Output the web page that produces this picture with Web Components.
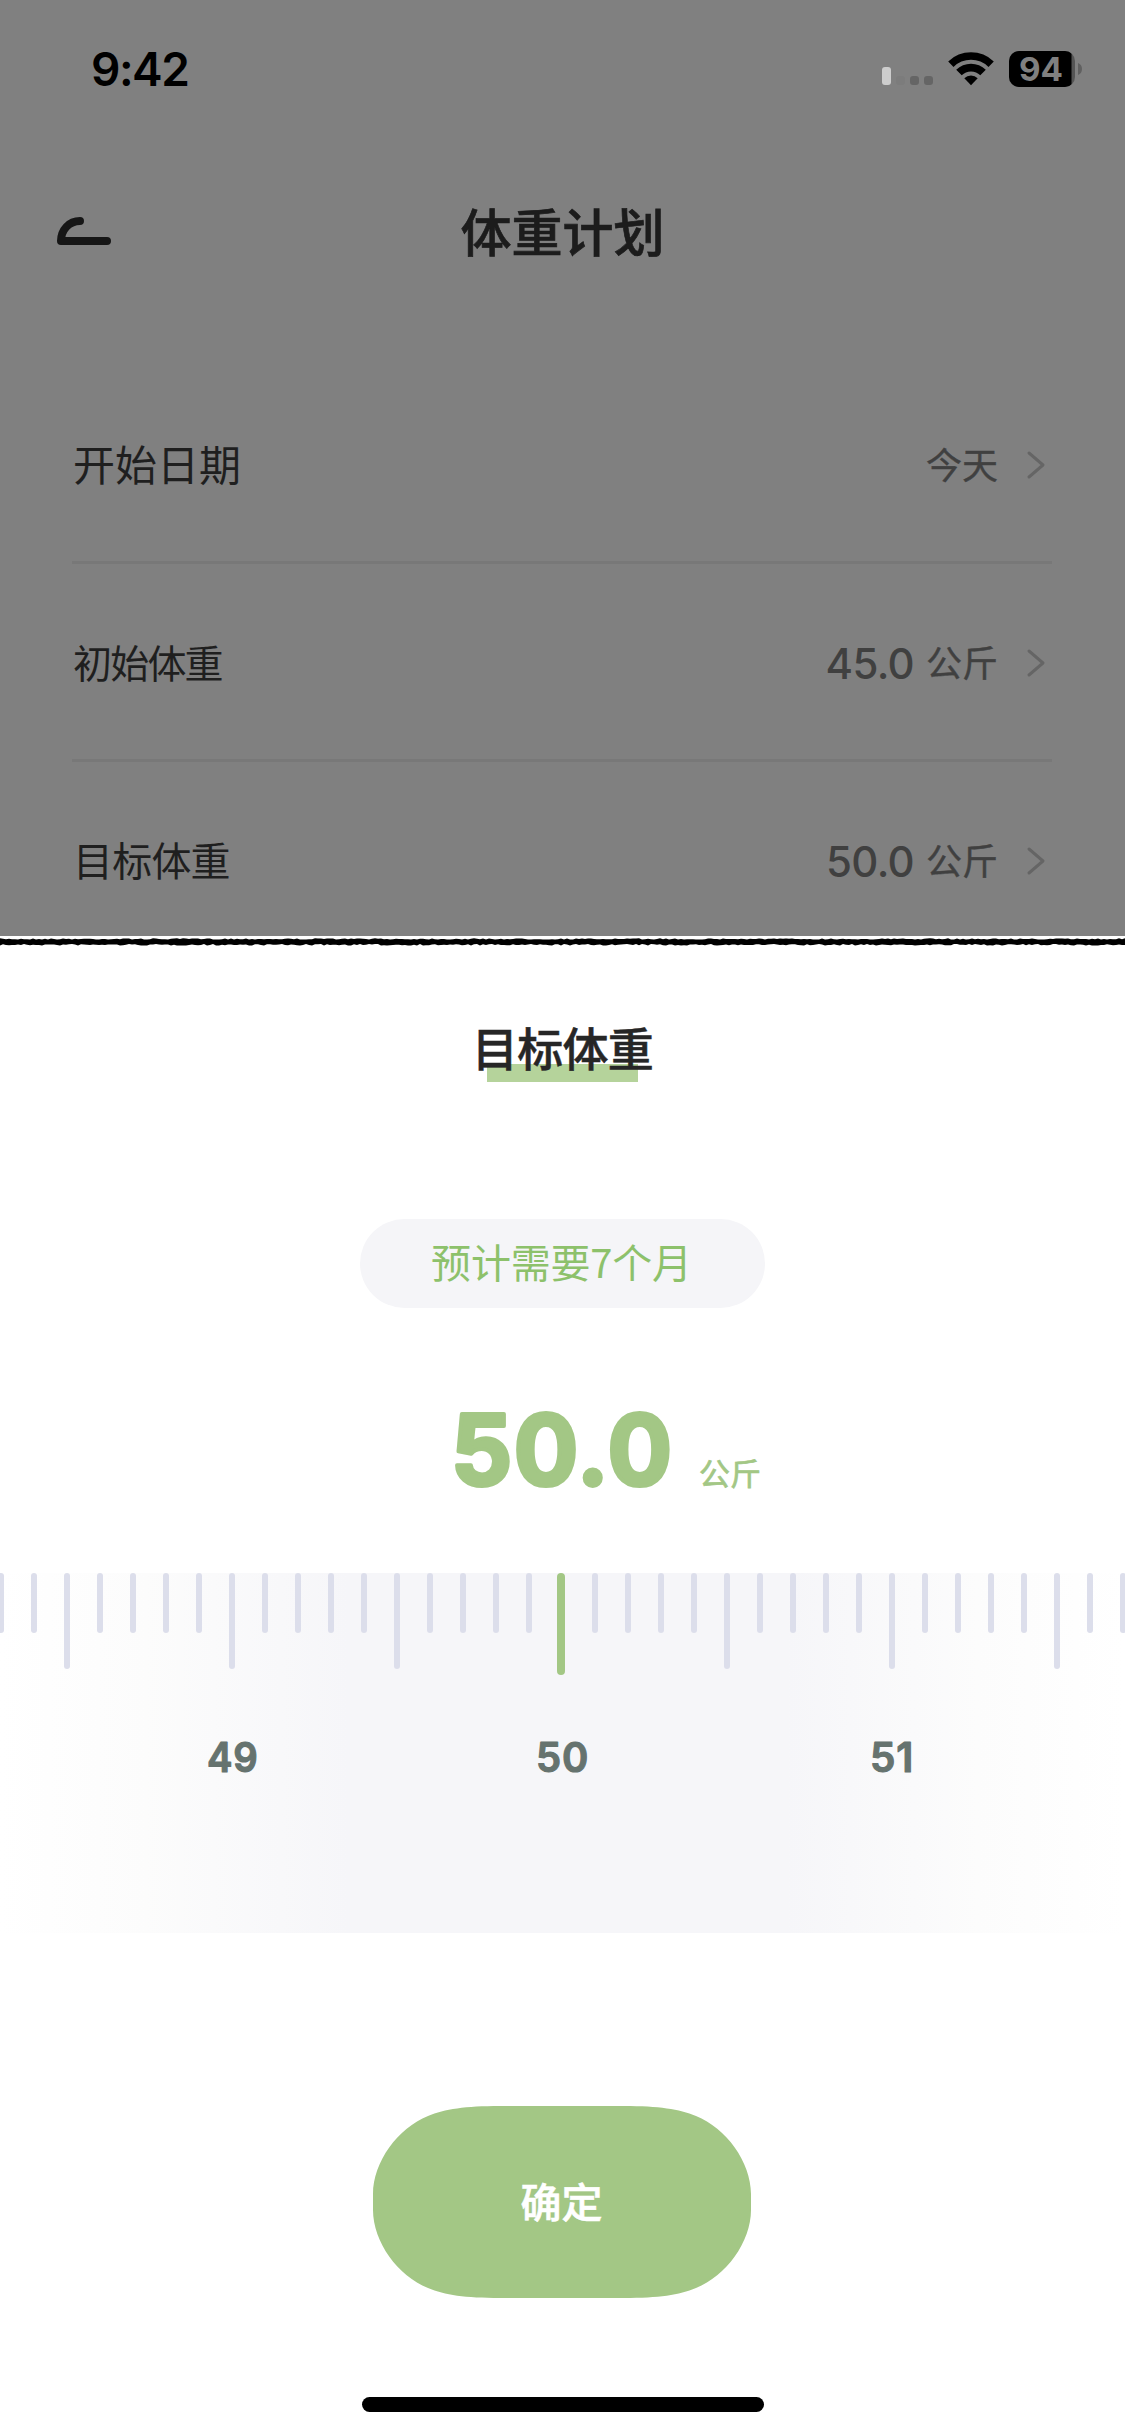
<!DOCTYPE html>
<html lang="zh-CN">
<head>
<meta charset="utf-8">
<title>体重计划</title>
<style>
html,body{margin:0;padding:0;background:#fff}
body{width:1125px;height:2436px;overflow:hidden;font-family:Inter,"Noto Sans CJK SC",sans-serif}
</style>
</head>
<body>
<weight-app></weight-app>
<script>
const define = (name, html, setup) => {
  const tpl = document.createElement('template');
  tpl.innerHTML = html;
  customElements.define(name, class extends HTMLElement {
    connectedCallback() {
      if (this.shadowRoot) return;
      const root = this.attachShadow({ mode: 'open' });
      root.append(tpl.content.cloneNode(true));
      if (setup) setup(this, root);
    }
  });
};

define('status-bar', `
<style>
:host{display:flex;height:138px;box-sizing:border-box;padding:0 43px 0 91px;justify-content:space-between;color:#000}
time{font-size:46px;font-weight:600;line-height:138px;letter-spacing:-1.5px}
svg{display:block;width:204px;height:138px}
.pct{font:700 33px Inter,sans-serif}
</style>
<time>9:42</time>
<svg viewBox="878 0 204 138">
  <rect x="882" y="67" width="9" height="18" rx="3" fill="#cdcdcd"/>
  <rect x="896" y="76" width="9" height="9" rx="3" fill="#7c7c7c"/>
  <rect x="910" y="76" width="9" height="9" rx="3" fill="#656565"/>
  <rect x="924" y="76" width="9" height="9" rx="3" fill="#656565"/>
  <path d="M948.200 61.500 A32.500 32.500 0 0 1 993.800 61.500 L988.500 67 A24.700 24.700 0 0 0 953.500 67 Z"/>
  <path d="M956.200 69.800 A21 21 0 0 1 985.800 69.800 L980.300 75.300 A13.200 13.200 0 0 0 961.700 75.300 Z"/>
  <path d="M964.300 78.300 A9.700 9.700 0 0 1 977.700 78.300 L971 85.300 Z"/>
  <clipPath id="b"><rect x="1009" y="51" width="66" height="36" rx="10"/></clipPath>
  <g clip-path="url(#b)"><rect x="1009" y="51" width="66" height="36" fill="#555"/><rect x="1009" y="51" width="62.500" height="36" rx="3"/></g>
  <path d="M1078 63 Q1082 64.500 1082 69 Q1082 73.500 1078 75 Z" fill="#606060"/>
  <text class="pct" x="1019" y="81" textLength="44" lengthAdjust="spacingAndGlyphs" fill="#808080">94</text>
</svg>`);

define('nav-bar', `
<style>
:host{display:grid;grid-template-columns:1fr auto 1fr;height:186px;padding:0 56px;align-items:center;color:#1c1c1c}
svg{display:block;width:56px;height:30px;margin-bottom:3px}
h1{margin:0;padding-top:3px;font-size:51px;font-weight:500;line-height:186px;-webkit-text-stroke:.7px #1c1c1c}
</style>
<svg viewBox="56 216 56 30" fill="none" stroke="#161616" stroke-width="8" stroke-linecap="round" stroke-linejoin="round"><path d="M80 221 C69 221 61 230 61 241 H107"/></svg>
<h1><slot></slot></h1>`);

define('setting-row', `
<style>
:host{display:flex;height:195px;border-bottom:3px solid #787878;align-items:center;justify-content:space-between;color:#1f1f1f}
:host([last]){border-color:transparent}
.label{font-size:var(--size,42px);letter-spacing:var(--track,0);padding-left:1px;margin-top:-2px}
.end{display:flex;align-items:center;color:#404040}
.num{font-size:42px;font-weight:500;letter-spacing:-.7px;margin:3px 12px 0 0}
.unit{font-size:36px;font-weight:400;margin-top:-1px;-webkit-text-stroke:.4px #404040}
svg{display:block;width:20px;height:30px;margin:2px 6px 0 28px}
</style>
<span class="label"><slot></slot></span>
<span class="end"><span class="num"></span><span class="unit"></span>
<svg viewBox="0 0 20 30" fill="none" stroke="#656565" stroke-width="3" stroke-linecap="round" stroke-linejoin="round"><path d="M3 3 L17 15 L3 27"/></svg></span>`,
(el, root) => {
  const num = root.querySelector('.num');
  if (el.getAttribute('num')) num.textContent = el.getAttribute('num'); else num.remove();
  root.querySelector('.unit').textContent = el.getAttribute('unit');
});

define('ink-edge', `
<style>:host{display:block;height:12px}svg{display:block;width:1125px;height:12px}</style>
<svg viewBox="0 0 1125 12"><path/></svg>`,
(el, root) => {
  let seed = 7;
  const rnd = () => (seed = (seed * 16807) % 2147483647) / 2147483647;
  const top = [], bottom = [];
  for (let x = 0; x <= 1128; x += 3) {
    top.push(x + ' ' + (2.3 + rnd() * 1.3).toFixed(1));
    bottom.unshift(x + ' ' + (8 + rnd() * 1.6).toFixed(1));
  }
  root.querySelector('path').setAttribute('d', 'M' + top.concat(bottom).join('L') + 'Z');
});

define('round-number', `
<style>
:host{display:block}
svg{display:block;overflow:visible;width:100%;height:100%}
text{font-family:Inter,sans-serif;fill:currentColor;stroke:currentColor;stroke-linejoin:round;stroke-linecap:round}
</style>
<svg><text></text></svg>`,
(el, root) => {
  const t = root.querySelector('text'), a = n => el.getAttribute(n);
  t.textContent = a('value');
  t.setAttribute('x', a('x')); t.setAttribute('y', a('y'));
  t.setAttribute('textLength', a('length'));
  t.setAttribute('lengthAdjust', 'spacingAndGlyphs');
  t.style.cssText = 'font-size:' + a('size') + 'px;font-weight:' + a('weight') + ';letter-spacing:' + a('track') + 'px;stroke-width:' + a('stroke') + 'px';
});

define('weight-ruler', `
<style>
:host{display:flex;flex-direction:column;height:360px;overflow:hidden;background:linear-gradient(90deg,#fff 0,#fcfcfc 13%,#f6f6f9 31%,#f6f6f9 70%,#fcfcfc 87%,#fff 100%)}
.ticks{display:flex;justify-content:center;height:102px;margin-right:1px}
.cell{flex:none;width:33px;display:flex;justify-content:center;align-items:flex-start}
.cell i{width:6px;height:60px;border-radius:3px;background:#dcdeeb}
.cell.long i{height:96px}
.cell.now i{width:8px;height:102px;border-radius:4px;background:#a3c785;margin-right:2px}
.labels{display:flex;justify-content:center;margin:60px 1px 0 0;color:#66736f}
.labels span{flex:none;width:330px;display:flex;justify-content:center}
round-number{width:54px;height:48px}
</style>
<div class="ticks"></div>
<div class="labels">
<span><round-number value="49" x="2" y="36.500" length="51.500" size="41" weight="600" stroke="1.200" track="0.800"></round-number></span>
<span><round-number value="50" x="1" y="36.500" length="53" size="41" weight="600" stroke="1.200" track="0.800"></round-number></span>
<span><round-number value="51" x="5" y="36.500" length="44" size="41" weight="600" stroke="1.200" track="0.800"></round-number></span>
</div>`,
(el, root) => {
  const ticks = root.querySelector('.ticks');
  for (let i = -17; i <= 17; i++) {
    const cell = document.createElement('div');
    cell.className = 'cell' + (i === 0 ? ' now' : i % 5 === 0 ? ' long' : '');
    cell.append(document.createElement('i'));
    ticks.append(cell);
  }
});

define('confirm-button', `
<style>
:host{display:grid;width:378px;height:192px}
svg,span{grid-area:1/1}
span{align-self:center;justify-self:center;color:#fff;font-size:41px;font-weight:500;line-height:60px;padding:2px 1px 0 0;-webkit-text-stroke:.6px #fff}
</style>
<svg viewBox="0 0 378 192" fill="#a3c785"><path d="M127 0 H251 C286 0 306 3 323 10 C353 22 378 56 378 88 V104 C378 136 353 170 323 182 C306 189 286 192 251 192 H127 C92 192 72 189 55 182 C25 170 0 136 0 104 V88 C0 56 25 22 55 10 C72 3 92 0 127 0Z"/></svg>
<span><slot></slot></span>`);

define('target-sheet', `
<style>
:host{display:flex;flex-direction:column;align-items:center;height:1500px;background:#fff}
ink-edge{align-self:stretch}
h2{margin:68px 0 0;height:66px;line-height:66px;font-size:46px;font-weight:500;letter-spacing:-.8px;color:#262626;background:linear-gradient(#b5d39b,#b5d39b) 17px 48px/151px 18px no-repeat;padding:0 2px;-webkit-text-stroke:.5px #262626}
.pill{margin-top:137px;width:405px;height:89px;border-radius:45px;background:#f5f5f8;color:#8dc16b;font-size:40px;font-family:"Noto Sans CJK SC",sans-serif;line-height:85px;text-align:center;text-indent:-2px;letter-spacing:-.2px}
.value{display:flex;align-items:flex-end;height:100px;margin:92px 0 0 90px;color:#a3c785;gap:30px}
.value round-number{width:215px;height:100px}
.unit{font-size:31px;line-height:40px;font-weight:400;padding-bottom:6px;-webkit-text-stroke:.7px #a3c785}
weight-ruler{align-self:stretch;margin-top:73px}
confirm-button{margin:173px 1px 0 0}
.home{width:402px;height:15px;border-radius:8px;background:#000;margin-top:99px}
</style>
<ink-edge></ink-edge>
<h2>目标体重</h2>
<div class="pill">预计需要7个月</div>
<div class="value"><round-number value="50.0" x="-3" y="84.500" length="222.500" size="98" weight="700" stroke="4" track="1.500"></round-number><span class="unit">公斤</span></div>
<weight-ruler></weight-ruler>
<confirm-button>确定</confirm-button>
<div class="home"></div>`);

define('weight-app', `
<style>
:host{display:block;width:1125px;height:2436px;overflow:hidden}
.page{height:936px;background:#808080;overflow:hidden}
.rows{padding:42px 73px 0 72px}
</style>
<div class="page">
<status-bar></status-bar>
<nav-bar>体重计划</nav-bar>
<div class="rows">
<setting-row unit="今天">开始日期</setting-row>
<setting-row num="45.0" unit="公斤" style="--size:39px;--track:-1.8px">初始体重</setting-row>
<setting-row last num="50.0" unit="公斤" style="--size:40px;--track:-.8px">目标体重</setting-row>
</div>
</div>
<target-sheet></target-sheet>`);
</script>
</body>
</html>
